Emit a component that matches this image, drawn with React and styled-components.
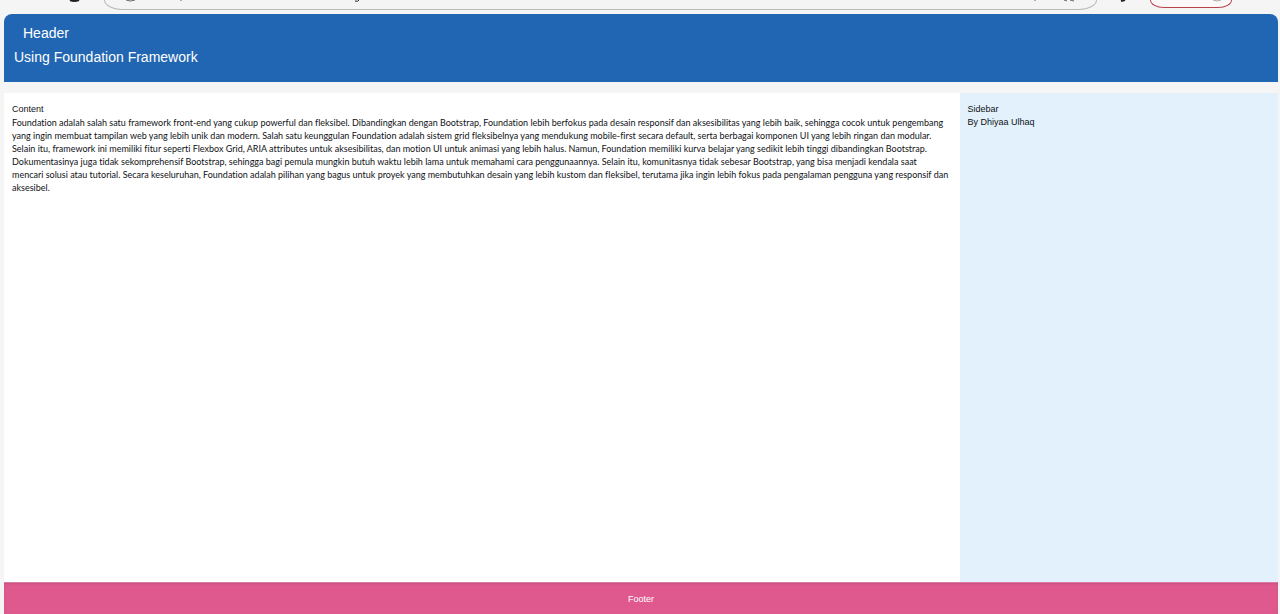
import React from "react";
import styled, { createGlobalStyle } from "styled-components";

const GlobalStyle = createGlobalStyle`
  *, *::before, *::after { box-sizing: border-box; }
  body {
    margin: 0;
    background: #f5f5f6;
    color: #101216;
    font: 9px/13px "Liberation Sans", Arial, sans-serif;
  }
  p, h1, h2 { margin: 0; font-size: inherit; font-weight: 400; }
`;

const Shell = styled.div`
  display: flex;
  flex-direction: column;
  min-height: 100vh;
`;

const BrowserStrip = styled.div`
  display: flex;
  height: 14px;
  padding: 0 48px 0 68px;
  overflow: hidden;
`;

const AddressBar = styled.div`
  flex: 1;
  display: flex;
  justify-content: space-between;
  height: 10px;
  margin: 0 20px 0 24px;
  padding: 0 16px;
  background: #f4f4f5;
  border: 1px solid #b9b9bb;
  border-top: 0;
  border-radius: 0 0 18px 18px / 0 0 10px 10px;
`;

const UpdatePill = styled.div`
  display: flex;
  justify-content: flex-end;
  width: 82px;
  height: 8px;
  margin-left: 21px;
  padding-right: 9px;
  background: #fcf8f8;
  border: 1px solid #b8434a;
  border-top: 0;
  border-radius: 0 0 14px 14px / 0 0 8px 8px;
`;

const Marks = styled.svg`
  display: block;
  flex: none;
`;

const Page = styled.div`
  flex: 1;
  display: flex;
  flex-direction: column;
  margin: 0 2px 0 4px;
`;

const Header = styled.header`
  height: 68px;
  padding: 7px 10px;
  background: #2166b2;
  color: #fff;
  border-radius: 8px 8px 0 0;
  font-size: 14px;
  line-height: 24px;
`;

const Title = styled.h1`
  padding-left: 9px;
`;

const Columns = styled.div`
  flex: 1;
  display: grid;
  grid-template-columns: 3fr 1fr;
  margin-top: 11px;
`;

const Main = styled.main`
  padding: 10px 10px 10px 8px;
  background: #fff;
`;

const Article = styled.p`
  font-family: Lato, "Liberation Sans", sans-serif;
  font-variant-ligatures: none;
`;

const Sidebar = styled.aside`
  padding: 10px 8px;
  background: #e3f1fc;
`;

const Footer = styled.footer`
  height: 32px;
  padding: 10px;
  background: #df598f;
  border-top: 1px solid #dc7ba3;
  box-shadow: inset 0 1px 2px #c4527f;
  color: #fff;
  text-align: center;
`;

export default function App() {
  return (
    <Shell>
      <GlobalStyle />
      <BrowserStrip aria-hidden="true">
        <Marks width="12" height="4" fill="none" stroke="#222" strokeWidth="2">
          <path d="M2 0Q6 2 11 0" />
        </Marks>
        <AddressBar>
          <Marks width="240" height="4" fill="none" stroke="#666">
            <path d="M5 0Q9 2 14 0M60 0V1" />
            <path d="M234 1Q237 2 238 0" stroke="#222" />
          </Marks>
          <Marks width="46" height="3" fill="none" stroke="#666">
            <path d="M1 0V1M30 0l3 1M36 0l4 1" />
          </Marks>
        </AddressBar>
        <Marks width="12" height="3" fill="none" stroke="#222" strokeWidth="2">
          <path d="M4 1L8 0" />
        </Marks>
        <UpdatePill>
          <Marks width="10" height="3" fill="none" stroke="#aaa">
            <path d="M1 0Q5 2 9 0" />
          </Marks>
        </UpdatePill>
      </BrowserStrip>
      <Page>
        <Header>
          <Title>Header</Title>
          <p>Using Foundation Framework</p>
        </Header>
        <Columns>
          <Main>
            <h2>Content</h2>
            <Article>
              Foundation adalah salah satu framework front-end yang cukup powerful dan fleksibel. Dibandingkan dengan Bootstrap, Foundation lebih berfokus pada desain responsif dan aksesibilitas yang lebih baik, sehingga cocok untuk pengembang yang ingin membuat tampilan web yang lebih unik dan modern. Salah satu keunggulan Foundation adalah sistem grid fleksibelnya yang mendukung mobile-first secara default, serta berbagai komponen UI yang lebih ringan dan modular. Selain itu, framework ini memiliki fitur seperti Flexbox Grid, ARIA attributes untuk aksesibilitas, dan motion UI untuk animasi yang lebih halus. Namun, Foundation memiliki kurva belajar yang sedikit lebih tinggi dibandingkan Bootstrap. Dokumentasinya juga tidak sekomprehensif Bootstrap, sehingga bagi pemula mungkin butuh waktu lebih lama untuk memahami cara penggunaannya. Selain itu, komunitasnya tidak sebesar Bootstrap, yang bisa menjadi kendala saat mencari solusi atau tutorial. Secara keseluruhan, Foundation adalah pilihan yang bagus untuk proyek yang membutuhkan desain yang lebih kustom dan fleksibel, terutama jika ingin lebih fokus pada pengalaman pengguna yang responsif dan aksesibel.
            </Article>
          </Main>
          <Sidebar>
            <h2>Sidebar</h2>
            <p>By Dhiyaa Ulhaq</p>
          </Sidebar>
        </Columns>
        <Footer>Footer</Footer>
      </Page>
    </Shell>
  );
}
